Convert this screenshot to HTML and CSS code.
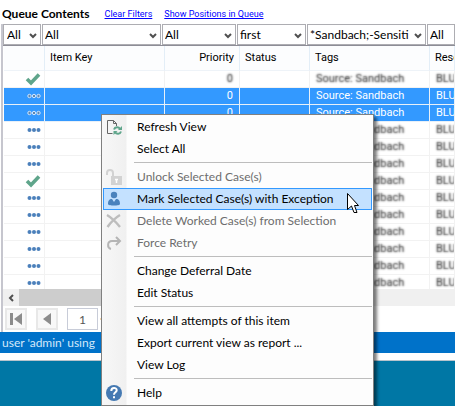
FILE: index.html
```
<!DOCTYPE html>
<html lang="en">
<head>
<meta charset="utf-8">
<title>Queue Contents</title>
<link rel="stylesheet" href="styles.css">
</head>
<body>
<svg class="defs" aria-hidden="true">
  <symbol id="chevron" viewBox="0 0 8 6"><path d="M1 1l3 3 3-3" fill="none" stroke="#505050" stroke-width="2"/></symbol>
  <symbol id="check" viewBox="0 0 16 14"><path d="M2 7l4 4 8-8.500" fill="none" stroke="#5fa58b" stroke-width="3.600"/></symbol>
  <symbol id="dots" viewBox="0 0 14 6"><g fill="#4b80bb"><circle cx="2.500" cy="3" r="2"/><circle cx="7" cy="3" r="2"/><circle cx="11.500" cy="3" r="2"/></g></symbol>
  <symbol id="rings" viewBox="0 0 14 6"><g fill="#5f86ad" stroke="#cfe6ff" stroke-width="1"><circle cx="2.500" cy="3" r="1.700"/><circle cx="7" cy="3" r="1.700"/><circle cx="11.500" cy="3" r="1.700"/></g></symbol>
</svg>
<main class="window">
  <header class="heading">
    <h1>Queue Contents</h1>
    <a href="#">Clear Filters</a>
    <a href="#">Show Positions in Queue</a>
  </header>
  <section class="panel">
    <div class="filters">
      <label class="filter filter-state"><select aria-label="State"><option>All</option></select><svg><use href="#chevron"/></svg></label>
      <label class="filter"><select aria-label="Item Key"><option>All</option></select><svg><use href="#chevron"/></svg></label>
      <label class="filter"><select aria-label="Priority"><option>All</option></select><svg><use href="#chevron"/></svg></label>
      <label class="filter"><select aria-label="Status"><option>first</option></select><svg><use href="#chevron"/></svg></label>
      <label class="filter"><select aria-label="Tags"><option>*Sandbach;-Sensiti</option></select><svg><use href="#chevron"/></svg></label>
      <label class="filter filter-last"><select aria-label="Resource"><option>All</option></select><svg><use href="#chevron"/></svg></label>
    </div>
    <div class="grid">
      <table>
        <colgroup><col class="c-state"><col class="c-key"><col class="c-priority"><col class="c-status"><col class="c-tags"><col class="c-resource"></colgroup>
        <thead><tr><th></th><th>Item Key</th><th class="num">Priority</th><th>Status</th><th>Tags</th><th>Resource</th></tr></thead>
        <tbody>
          <tr><td><svg class="check"><use href="#check"/></svg></td><td></td><td class="num">0</td><td></td><td>Source: Sandbach</td><td>BLUE</td></tr>
          <tr class="selected"><td><svg class="dots"><use href="#rings"/></svg></td><td></td><td class="num">0</td><td></td><td>Source: Sandbach</td><td>BLUE</td></tr>
          <tr class="selected"><td><svg class="dots"><use href="#rings"/></svg></td><td></td><td class="num">0</td><td></td><td>Source: Sandbach</td><td>BLUE</td></tr>
          <tr><td><svg class="dots"><use href="#dots"/></svg></td><td></td><td class="num">0</td><td></td><td>Source: Sandbach</td><td>BLUE</td></tr>
          <tr><td><svg class="dots"><use href="#dots"/></svg></td><td></td><td class="num">0</td><td></td><td>Source: Sandbach</td><td>BLUE</td></tr>
          <tr><td><svg class="dots"><use href="#dots"/></svg></td><td></td><td class="num">0</td><td></td><td>Source: Sandbach</td><td>BLUE</td></tr>
          <tr><td><svg class="check"><use href="#check"/></svg></td><td></td><td class="num">0</td><td></td><td>Source: Sandbach</td><td>BLUE</td></tr>
          <tr><td><svg class="dots"><use href="#dots"/></svg></td><td></td><td class="num">0</td><td></td><td>Source: Sandbach</td><td>BLUE</td></tr>
          <tr><td><svg class="dots"><use href="#dots"/></svg></td><td></td><td class="num">0</td><td></td><td>Source: Sandbach</td><td>BLUE</td></tr>
          <tr><td><svg class="dots"><use href="#dots"/></svg></td><td></td><td class="num">0</td><td></td><td>Source: Sandbach</td><td>BLUE</td></tr>
          <tr><td><svg class="dots"><use href="#dots"/></svg></td><td></td><td class="num">0</td><td></td><td>Source: Sandbach</td><td>BLUE</td></tr>
          <tr><td><svg class="dots"><use href="#dots"/></svg></td><td></td><td class="num">0</td><td></td><td>Source: Sandbach</td><td>BLUE</td></tr>
          <tr><td><svg class="dots"><use href="#dots"/></svg></td><td></td><td class="num">0</td><td></td><td>Source: Sandbach</td><td>BLUE</td></tr>
        </tbody>
      </table>
    </div>
    <div class="scrollbar">
      <button type="button" aria-label="Scroll left"><svg width="8" height="8" viewBox="0 0 8 8"><path d="M6 1L3 4l3 3" fill="none" stroke="#505050" stroke-width="2"/></svg></button>
      <span class="thumb"></span>
    </div>
    <nav class="pager" aria-label="Pages">
      <button type="button" aria-label="First page"><svg width="14" height="14" viewBox="0 0 14 14"><path d="M1 1h3v12H1zM13 1v12L5 7z" fill="#8c8c8c"/></svg></button>
      <button type="button" aria-label="Previous page"><svg width="14" height="14" viewBox="0 0 14 14"><path d="M11 1v12L3 7z" fill="#8c8c8c"/></svg></button>
      <input type="text" aria-label="Page" value="1">
      <svg width="4" height="6" viewBox="0 0 4 6"><path d="M4 0v6L0 3z" fill="#f0a030"/></svg>
    </nav>
  </section>
  <footer class="status">user 'admin' using</footer>
  <div class="edge"></div>
</main>

<div class="menu" role="menu">
  <button type="button" role="menuitem">
    <svg viewBox="0 0 16 16"><path d="M6.500 14.500h-5v-13h6l3 3V7M7.500 1.500v3h3" fill="none" stroke="#666" stroke-width="1"/><path d="M8 10.500c1-3 4.500-3 6-.8M15 12.500c-1 3-4.500 3-6 .8" fill="none" stroke="#5fa58b" stroke-width="2"/><path d="M16 7v4h-4zM7.500 16v-4h4z" fill="#5fa58b"/></svg>Refresh View</button>
  <button type="button" role="menuitem"><span class="blank"></span>Select All</button>
  <hr>
  <button type="button" role="menuitem" disabled>
    <svg viewBox="0 0 16 16"><path d="M1 6V4a3 3 0 0 1 6 0v3" fill="none" stroke="#d2d2d2" stroke-width="2"/><path d="M5 7h11v9H5z" fill="#d2d2d2"/><path d="M10.500 14v-4M9 10.500h3" stroke="#fff" stroke-width="1.500"/></svg>Unlock Selected Case(s)</button>
  <button type="button" role="menuitem" class="active">
    <svg viewBox="0 0 16 16"><circle cx="8" cy="4" r="3.200" fill="#4a82bd"/><path d="M2 13c0-3 1-5 4-5l2 3 2-3c3 0 4 2 4 5 0 2-12 2-12 0z" fill="#4a82bd"/></svg>Mark Selected Case(s) with Exception</button>
  <button type="button" role="menuitem" disabled>
    <svg viewBox="0 0 16 16"><path d="M1 2c5 3 9 7 13 12M14 2C9 5 5 9 1.500 14" fill="none" stroke="#bdbdbd" stroke-width="2.400"/></svg>Delete Worked Case(s) from Selection</button>
  <button type="button" role="menuitem" disabled>
    <svg viewBox="0 0 16 16"><path d="M5 14C1 13 1 6 6 6h8M10 2l4 4-4 4" fill="none" stroke="#b5b5b5" stroke-width="2"/></svg>Force Retry</button>
  <hr>
  <button type="button" role="menuitem"><span class="blank"></span>Change Deferral Date</button>
  <button type="button" role="menuitem"><span class="blank"></span>Edit Status</button>
  <hr>
  <button type="button" role="menuitem"><span class="blank"></span>View all attempts of this item</button>
  <button type="button" role="menuitem"><span class="blank"></span>Export current view as report ...</button>
  <button type="button" role="menuitem"><span class="blank"></span>View Log</button>
  <hr>
  <button type="button" role="menuitem">
    <svg viewBox="0 0 16 16"><circle cx="8" cy="8" r="8" fill="#4579b2"/><path d="M5.300 6c0-4 5.400-3.700 5.400-.8C10.700 7.300 8 7.200 8 9.700" fill="none" stroke="#fff" stroke-width="2"/><path d="M7 11.200h2v2H7z" fill="#fff"/></svg>Help</button>
</div>
<svg class="pointer" width="12" height="21" viewBox="0 0 12 21"><path d="M.5.5v16l4-3.500 2.500 6.500h3L7.500 12.500h4z" fill="#fff" stroke="#000" stroke-width="1"/></svg>
</body>
</html>
```
FILE: styles.css
```
* { box-sizing: border-box; }

html, body { height: 100%; }

body {
  margin: 0;
  overflow: hidden;
  background: #0077a5;
  color: #000;
  font: 12px/16px Lato, "Open Sans", sans-serif;
}

button, select, input { font: inherit; color: inherit; margin: 0; }

.defs { display: none; }

.window { background: #fff; }

.heading {
  display: flex;
  align-items: center;
  height: 24px;
  padding: 4px 2px 0;
  white-space: nowrap;
}
.heading h1 { margin: 0 15px 0 0; font-size: 12px; font-weight: 700; }
.heading a { margin-right: 12px; color: #00f; font-size: 9px; font-family: Roboto, sans-serif; }

.panel { margin-left: 1px; border-left: 2px solid #c6c6ce; overflow: hidden; }

.filters {
  display: grid;
  grid-template-columns: 38px 119px 74px 69px 119px 1fr;
  gap: 1px;
  height: 22px;
  border-bottom: 1px solid #8d8d96;
}
.filter { position: relative; display: block; }
.filter select {
  appearance: none;
  width: 100%;
  height: 21px;
  padding: 0 2px;
  border: 1px solid #adadb2;
  border-radius: 0;
  background: #fff;
  font-size: 12px;
}
.filter svg { position: absolute; right: 4px; top: 9px; width: 8px; height: 6px; }
.filter-state select { padding-left: 3px; }
.filter-last svg { display: none; }

.grid { margin-bottom: -3px; padding-left: 1px; }

table {
  width: 100%;
  table-layout: fixed;
  border-collapse: separate;
  border-spacing: 0;
  font-family: Roboto, "Open Sans", sans-serif;
}
.c-state { width: 41px; }
.c-key { width: 120px; }
.c-priority { width: 75px; }
.c-status { width: 70px; }
.c-tags { width: 120px; }

th {
  height: 25px;
  padding: 0 5px;
  border-right: 1px solid #e3eef7;
  border-bottom: 1px solid #eef3f8;
  background: #fcfdfe;
  font-weight: 400;
  font-size: 11px;
  text-align: left;
  white-space: nowrap;
}
td {
  height: 17px;
  padding: 0 6px;
  border-right: 1px solid #f2f2f2;
  border-bottom: 1px solid #f2f2f2;
  font-size: 11px;
  line-height: 16px;
  white-space: nowrap;
  color: transparent;
  text-shadow: 0 0 2px #222;
}
th, td { overflow: hidden; }
.num { text-align: right; }
td:first-child { padding: 0 3px; text-align: right; }
td svg { display: block; margin-left: auto; }
.check { width: 16px; height: 14px; }
.dots { width: 14px; height: 6px; }

.selected td {
  border-color: #e8f0f8;
  background: #3399ff;
  color: #fff;
  text-shadow: none;
}

.scrollbar { position: relative; display: flex; height: 17px; background: #f0f0f0; }
.scrollbar button { display: grid; place-items: center; width: 16px; padding: 0; border: 0; background: none; }
.thumb { width: 60%; max-width: 240px; background: #cdcdcd; }

.pager { display: flex; align-items: center; gap: 9px; height: 26px; padding-left: 2px; }
.pager button {
  display: grid;
  place-items: center;
  width: 22px;
  height: 22px;
  padding: 0;
  border: 2px solid #e8e8e8;
  background: #f8f8f8;
}
.pager input {
  width: 31px;
  height: 22px;
  margin-right: -7px;
  padding: 0;
  border: 1px solid #c8ccd8;
  background: #fff;
  color: #555;
  font-size: 12px;
  text-align: center;
}

.status { height: 21px; padding: 0 2px; background: #0072c9; color: #d3e8fa; font-size: 12px; line-height: 22px; }
.edge { height: 8px; background: #fff; border-bottom: 1px solid #b8c4cc; }

.menu {
  position: absolute;
  left: 101px;
  top: 114px;
  width: 273px;
  padding: 1px;
  border: 1px solid #808080;
  background: linear-gradient(to right, #f7f7f7, #f0f0f0 24px, #fdfdfd 25px);
  box-shadow: 3px 3px 3px rgba(0, 0, 0, .5);
}
.menu button {
  display: flex;
  align-items: center;
  gap: 15px;
  width: 100%;
  height: 22px;
  padding: 0 2px;
  border: 1px solid transparent;
  background: none;
  text-align: left;
  white-space: nowrap;
}
.menu button:disabled { color: #6d6d6d; }
.menu .active { border-color: #3399ff; background: #c4e1ff; }
.menu svg, .blank { flex: none; width: 16px; height: 16px; }
.menu hr { height: 1px; margin: 2px 0 3px 31px; border: 0; background: #bdbdbd; }

.pointer { position: absolute; left: 347px; top: 193px; }
```
